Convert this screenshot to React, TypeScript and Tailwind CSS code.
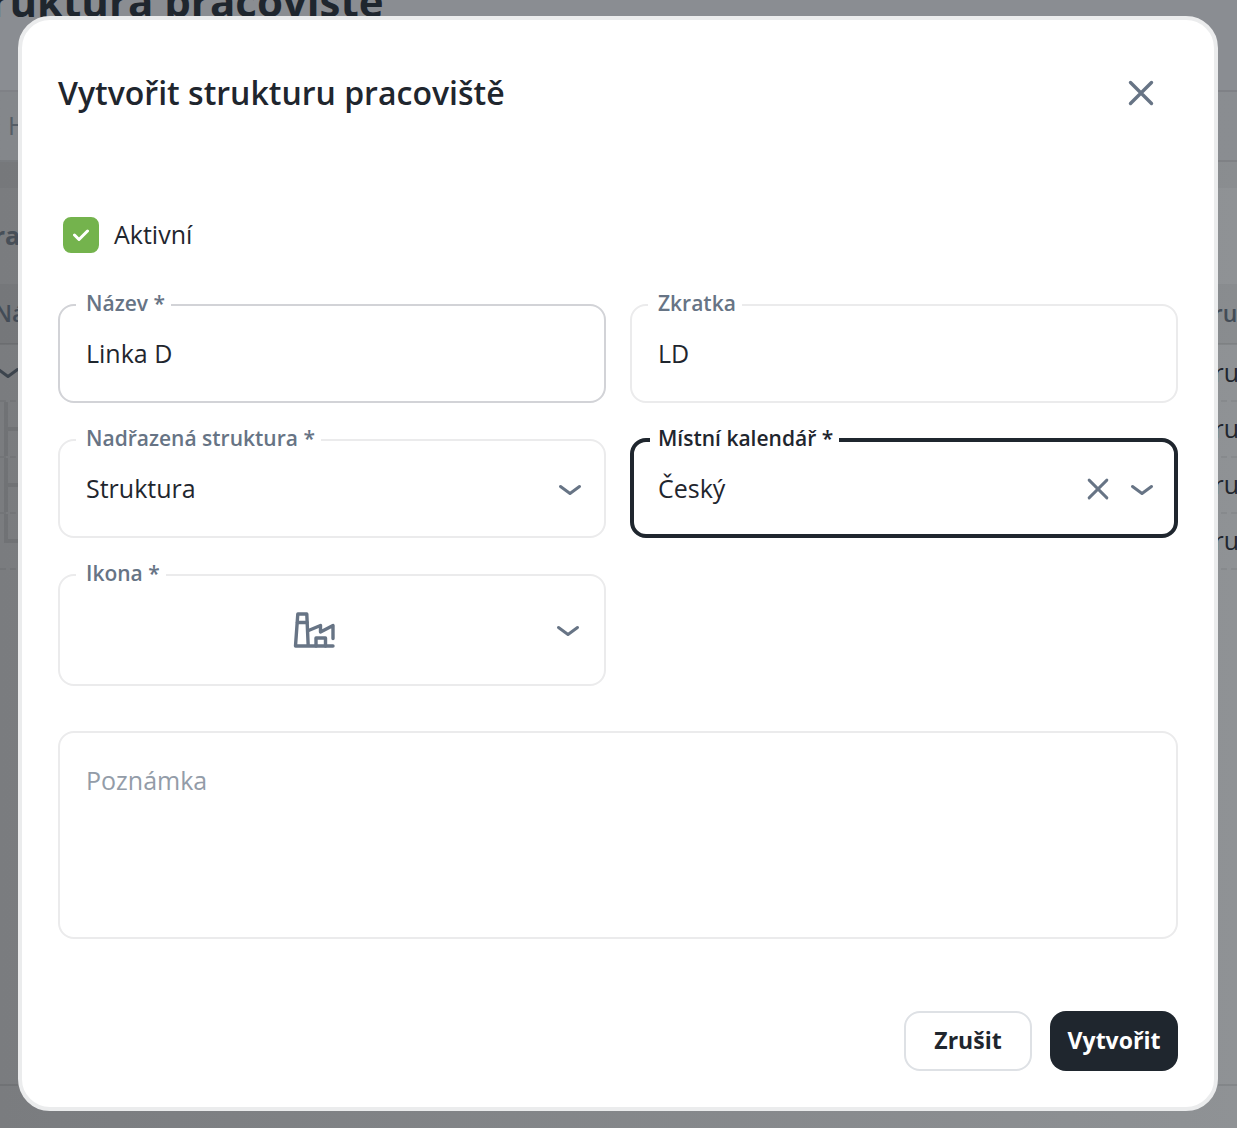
import React, { useState } from 'react';

interface IconProps {
  className?: string;
}

const CloseIcon: React.FC<IconProps> = ({ className }) => (
  <svg className={className} viewBox="0 0 26 26" fill="none" stroke="currentColor" strokeLinecap="round" aria-hidden="true">
    <path d="M2.5 2.5l21 21M23.5 2.5l-21 21" strokeWidth={3.4} />
  </svg>
);

const ChevronIcon: React.FC<IconProps> = ({ className }) => (
  <svg className={className} viewBox="0 0 24 12" fill="none" stroke="currentColor" strokeWidth={3} strokeLinecap="round" strokeLinejoin="round" aria-hidden="true">
    <path d="M2.5 2.5L12 9.5L21.5 2.5" />
  </svg>
);

const FactoryIcon: React.FC<IconProps> = ({ className }) => (
  <svg className={className} viewBox="0 0 42 36" fill="none" stroke="currentColor" strokeWidth={3.4} strokeLinecap="round" strokeLinejoin="round" aria-hidden="true">
    <path d="M40 34H2.5L4.8 2H13.8L15.2 34" />
    <path d="M4.5 10.5H14" />
    <path d="M15.5 18.5L27.500 13.5V20L40 13.5V26.5" />
    <path d="M23 34V26H32.5V34" />
  </svg>
);

interface FieldProps {
  id: string;
  label: string;
  tone?: 'default' | 'hover' | 'focused';
  children: React.ReactNode;
}

const tones = {
  default: 'border-2 border-[#ebebec] text-[#677485]',
  hover: 'border-2 border-[#d2d3d7] text-[#677485]',
  focused: 'border-4 border-[#1f262e] text-[#1f262e]',
};

const Field: React.FC<FieldProps> = ({ id, label, tone = 'default', children }) => (
  <fieldset className={`min-w-0 rounded-2xl ${tones[tone]}`}>
    <legend className={`ml-4 h-[26px] pr-1.5 text-[21px] leading-[22px] font-semibold ${tone === 'focused' ? 'pl-2' : 'pl-2.5'}`}>
      <label htmlFor={id}>{label}</label>
    </legend>
    {children}
  </fieldset>
);

const rows = ['Struktura', 'Struktura', 'Struktura', 'Struktura'];

const Background: React.FC = () => (
  <main className="flex h-screen flex-col overflow-hidden bg-linear-to-r from-[#7a7c7f] to-[#8f9295] text-[#1f262e]">
    <header className="h-[92px] shrink-0 border-b-2 border-black/8 bg-[#8a8d92]">
      <h1 className="-mt-7 -ml-[51px] text-[42px] leading-[58px] font-bold whitespace-nowrap">Struktura pracoviště</h1>
    </header>
    <div className="flex h-[70px] shrink-0 items-center border-b-2 border-black/8 bg-linear-to-r from-[#84878b] to-[#8a8d91] pl-2 text-[25px] text-[#555d66]">Hledat</div>
    <div className="h-[26px] shrink-0 bg-black/3" />
    <section className="flex h-[898px] shrink-0 flex-col border-b-2 border-black/8">
      <h2 className="-ml-[22px] flex h-24 items-center text-[25px] font-bold text-[#474f58]">Pracoviště</h2>
      <table className="w-full table-fixed text-left text-[25px]">
        <thead>
          <tr className="h-[60px] border-b-2 border-black/8 bg-black/4 text-[23px] text-[#434c57]">
            <th className="p-0 font-semibold"><span className="-ml-1.5">Název</span></th>
            <th className="w-[46px] p-0 font-semibold">Struktura</th>
          </tr>
        </thead>
        <tbody>
          {rows.map((row, i) => (
            <tr key={i} className="border-b-2 border-dashed border-black/5">
              <td className="p-0">
                {i === 0 ? (
                  <ChevronIcon className="-ml-1 h-3 w-6 text-[#3c444d]" />
                ) : (
                  <div className="ml-1 h-[54px] w-8">
                    <div className="h-[29px] border-b-4 border-l-4 border-black/8" />
                    {i < rows.length - 1 && <div className="h-[25px] border-l-4 border-black/8" />}
                  </div>
                )}
              </td>
              <td className={i === 0 ? 'h-[57px] p-0' : 'h-[54px] p-0'}>{row}</td>
            </tr>
          ))}
        </tbody>
      </table>
    </section>
  </main>
);

export default function App() {
  const [active, setActive] = useState(true);
  const [name, setName] = useState('Linka D');
  const [short, setShort] = useState('LD');
  const [calendar, setCalendar] = useState('Český');
  const [note, setNote] = useState('');

  const control = 'block w-full appearance-none bg-transparent px-[26px] text-[25px] text-[#1f262e] outline-none';

  return (
    <div className="font-['Open_Sans','Noto_Sans',sans-serif]">
      <Background />
      <div className="fixed inset-0 overflow-auto pt-4 pr-[19px] pb-4 pl-[18px]">
        <div role="dialog" aria-modal="true" aria-labelledby="dialog-title" className="rounded-[32px] border-4 border-[#ebeced] bg-white px-9 pb-9">
          <div className="flex items-center justify-between pt-12 pr-4">
            <h2 id="dialog-title" className="text-[32px] leading-[50px] font-semibold text-[#1f262e]">Vytvořit strukturu pracoviště</h2>
            <button type="button" aria-label="Zavřít" className="flex size-[42px] items-center justify-center text-[#677485]">
              <CloseIcon className="size-[26px]" />
            </button>
          </div>

          <form onSubmit={(e) => e.preventDefault()}>
            <label className="mt-[99px] ml-[5px] flex h-9 w-fit items-center gap-[15px] text-[25px] text-[#1f262e]">
              <span className="grid size-9 place-items-center">
                <input
                  type="checkbox"
                  checked={active}
                  onChange={(e) => setActive(e.target.checked)}
                  className="col-start-1 row-start-1 size-9 appearance-none rounded-lg border-2 border-[#74b34d] checked:bg-[#74b34d]"
                />
                <svg className="pointer-events-none col-start-1 row-start-1 size-4" viewBox="0 0 16 16" fill="none" stroke="white" strokeWidth={3} strokeLinecap="round" strokeLinejoin="round" aria-hidden="true">
                  <path d="M1.5 8L6 12.5L14.5 4" />
                </svg>
              </span>
              Aktivní
            </label>

            <div className="mt-[39px] grid grid-cols-2 gap-6">
              <Field id="name" label="Název *" tone="hover">
                <div className="pb-[13px]">
                  <input id="name" type="text" value={name} onChange={(e) => setName(e.target.value)} className={`h-[70px] ${control}`} />
                </div>
              </Field>
              <Field id="short" label="Zkratka">
                <div className="pb-[13px]">
                  <input id="short" type="text" value={short} onChange={(e) => setShort(e.target.value)} className={`h-[70px] ${control}`} />
                </div>
              </Field>
              <Field id="parent" label="Nadřazená struktura *">
                <div className="relative pb-[11px]">
                  <select id="parent" className={`h-[72px] ${control}`}>
                    <option>Struktura</option>
                  </select>
                  <ChevronIcon className="pointer-events-none absolute top-[31px] right-[22px] h-3 w-6" />
                </div>
              </Field>
              <Field id="calendar" label="Místní kalendář *" tone="focused">
                <div className="relative -mx-0.5 pb-[9px]">
                  <select id="calendar" value={calendar} onChange={(e) => setCalendar(e.target.value)} className={`h-[72px] ${control}`}>
                    <option value="" />
                    <option>Český</option>
                  </select>
                  <button type="button" aria-label="Vymazat" onClick={() => setCalendar('')} className="absolute top-[25px] right-[67px] text-[#677485]">
                    <CloseIcon className="size-[22px]" />
                  </button>
                  <ChevronIcon className="pointer-events-none absolute top-[31px] right-[22px] h-3 w-6 text-[#677485]" />
                </div>
              </Field>
              <Field id="icon" label="Ikona *">
                <button id="icon" type="button" aria-haspopup="listbox" className="mb-[11px] flex h-[85px] w-full items-center pr-6">
                  <span className="flex flex-1 justify-center pb-0.5 pl-3">
                    <FactoryIcon className="h-9 w-[42px]" />
                  </span>
                  <ChevronIcon className="h-3 w-6" />
                </button>
              </Field>
            </div>

            <textarea
              aria-label="Poznámka"
              placeholder="Poznámka"
              value={note}
              onChange={(e) => setNote(e.target.value)}
              className="mt-[45px] block h-52 w-full resize-none rounded-2xl border-2 border-[#ebebec] px-[26px] py-[29px] text-[25px] text-[#1f262e] outline-none placeholder:text-[#939ca8]"
            />

            <div className="mt-[72px] flex justify-end gap-[18px] text-[23px] font-bold">
              <button type="button" className="h-[60px] w-32 rounded-2xl border-2 border-[#dee1e5] pb-0.5 text-[#1f262e]">Zrušit</button>
              <button type="submit" className="h-[60px] w-32 rounded-2xl bg-[#1f262e] pb-0.5 text-white">Vytvořit</button>
            </div>
          </form>
        </div>
      </div>
    </div>
  );
}
